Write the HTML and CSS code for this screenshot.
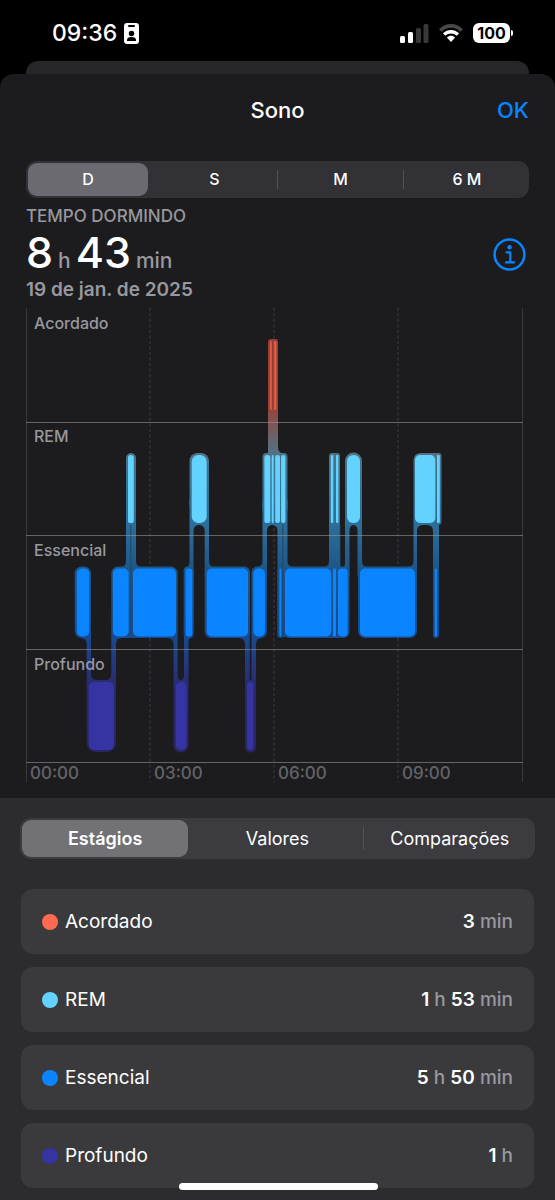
FILE: index.html
```html
<!DOCTYPE html>
<html lang="pt-BR">
<head>
<meta charset="utf-8">
<meta name="viewport" content="width=device-width, initial-scale=1">
<title>Sono</title>
<link rel="stylesheet" href="styles.css">
</head>
<body>
<div class="status-bar">
  <div class="status-left">
    <time class="clock">09:36</time>
    <svg class="id-icon" width="15" height="21" viewBox="0 0 15 21" aria-hidden="true">
      <rect width="15" height="21" rx="3" fill="#fff"/>
      <rect x="4" y="2" width="7" height="2" rx="1" fill="#000"/>
      <circle cx="7.5" cy="10.5" r="2.7" fill="#000"/>
      <path d="M3 18v-1q0-3 4.500-3t4.500 3v1z" fill="#000"/>
    </svg>
  </div>
  <div class="status-right">
    <svg width="29" height="19" viewBox="0 0 29 19" aria-hidden="true">
      <rect x="0" y="12" width="5" height="7" rx="1.500" fill="#fff"/>
      <rect x="8" y="8" width="5" height="11" rx="1.500" fill="#fff"/>
      <rect x="16" y="4" width="5" height="15" rx="1.500" fill="#38383a"/>
      <rect x="23.500" y="0" width="5" height="19" rx="1.500" fill="#38383a"/>
    </svg>
    <svg width="24" height="19" viewBox="0 0 24 19" aria-hidden="true">
      <path d="M0 5.200C6.800-1.700 17.200-1.700 24 5.200L21.600 7.700C16 2.400 8 2.400 2.400 7.700Z" fill="#48484a"/>
      <path d="M3.900 9.300c4.700-4.500 11.500-4.500 16.200 0l-2.400 2.500c-3.400-3.100-8-3.100-11.400 0z" fill="#fff"/>
      <path d="M7.900 13.400c2.400-2.100 5.800-2.100 8.200 0L12 18z" fill="#fff"/>
    </svg>
    <div class="battery"><span class="battery-level">100</span><span class="battery-tip"></span></div>
  </div>
</div>
<div class="back-sheet"></div>
<main class="sheet">
  <header class="sheet-header">
    <h1 class="title">Sono</h1>
    <button class="ok" type="button">OK</button>
  </header>

  <section class="overview">
    <div class="segments" role="group" aria-label="Período">
      <button class="segment selected" type="button" aria-pressed="true">D</button>
      <button class="segment" type="button" aria-pressed="false">S</button>
      <button class="segment divided" type="button" aria-pressed="false">M</button>
      <button class="segment divided" type="button" aria-pressed="false">6 M</button>
    </div>
    <div class="summary">
      <div class="summary-text">
        <p class="caption">TEMPO DORMINDO</p>
        <p class="total"><b>8</b><span>h</span><b>43</b><span>min</span></p>
        <p class="date">19 de jan. de 2025</p>
      </div>
      <button class="info" type="button" aria-label="Informações">
        <svg width="33" height="33" viewBox="0 0 33 33" fill="none" stroke="#0a84ff" aria-hidden="true">
          <circle cx="16.500" cy="16.500" r="14.900" stroke-width="2.500"/>
          <circle cx="16.600" cy="9.300" r="2.200" fill="#0a84ff" stroke="none"/>
          <path d="M13.600 14.400H17.300V24.300M13 24.400H21" stroke-width="2.200" stroke-linecap="round" stroke-linejoin="round"/>
        </svg>
      </button>
    </div>

    <svg class="chart" viewBox="26 308 503 475" role="img" aria-label="Estágios do sono">
      <defs>
        <linearGradient id="halo" gradientUnits="userSpaceOnUse" x1="0" y1="339" x2="0" y2="752">
          <stop offset="0" stop-color="#944135"/>
          <stop offset=".17" stop-color="#94463c"/>
          <stop offset=".27" stop-color="#56707f"/>
          <stop offset=".33" stop-color="#397592"/>
          <stop offset=".45" stop-color="#2d6e98"/>
          <stop offset=".56" stop-color="#1c5689"/>
          <stop offset=".72" stop-color="#174a8e"/>
          <stop offset=".8" stop-color="#25357c"/>
          <stop offset=".85" stop-color="#28286a"/>
          <stop offset="1" stop-color="#28265f"/>
        </linearGradient>
      </defs>

      <g stroke="#3e3e41" stroke-dasharray="3 2.500">
        <path d="M150 308V782M274 308V782M398 308V782"/>
      </g>
      <path d="M26.500 308V782M522.500 308V782" stroke="#38383b"/>

      <g fill="url(#halo)">
        <path d="M268 342a3 3 0 0 1 3-3h4a3 3 0 0 1 3 3V447q0 6 5 6V458H268Z"/>
        <rect x="126" y="453" width="10" height="184" rx="5"/>
        <path d="M126 500H136V561Q136 567 142 567V572H120V567Q126 567 126 561Z"/>
        <rect x="189.500" y="453" width="19.500" height="60" rx="8"/>
        <path d="M189.500 500H209V561Q209 567 215 567V576H204.700V531Q204.700 525 199 525Q193.500 525 193.500 531V632H187V567Q189.500 566 189.500 562Z"/>
        <rect x="262.500" y="453" width="25" height="60" rx="4"/>
        <path d="M262.500 500H287.500V561Q287.500 567 294 567V637H277.500V531Q277.500 525 272 525Q267 525 267 531V576H256V567Q262.500 567 262.500 561Z"/>
        <path d="M329 456a3 3 0 0 1 3-3h5a3 3 0 0 1 3 3V563Q340 567 342.500 567Q345 567 345 563V461a8 8 0 0 1 17 0V561Q362 567 368 567V576H357.500V531Q357.500 525 353.500 525Q349.500 525 349.500 531V576H323V567Q329 567 329 561Z"/>
        <path d="M413.500 460a7 7 0 0 1 7-7H438.500a3 3 0 0 1 3 3V522a3 3 0 0 1-2.500 3V635a3 3 0 0 1-6 0V531Q433 525 427 525H423Q417 525 417 531V576H407V567Q413.500 567 413.500 561Z"/>

        <rect x="74.700" y="566.500" width="16.300" height="71.500" rx="7"/>
        <rect x="111.300" y="566.500" width="66.400" height="71.500" rx="7"/>
        <rect x="183.700" y="566.500" width="10" height="71.500" rx="4"/>
        <rect x="204.700" y="566.500" width="45.300" height="71.500" rx="6"/>
        <rect x="251.500" y="566.500" width="15.500" height="71.500" rx="6"/>
        <rect x="277.500" y="566.500" width="6" height="71.500" rx="3"/>
        <rect x="283" y="566.500" width="66.500" height="71.500" rx="6"/>
        <rect x="358" y="566.500" width="59" height="71.500" rx="7"/>

        <path d="M80 630H91V674Q91 680 97 680H105.300Q111.300 680 111.300 674V630H122V638Q116 638 116 644V743a9 9 0 0 1-9 9H95.700a9 9 0 0 1-9-9V644Q86.700 638 80.700 638Z"/>
        <path d="M167 630H177.700V675Q177.700 680 180.800 680Q184 680 184 675V630H191V638Q188.500 638 188.500 642V745a7 7 0 0 1-15 0V644Q173.500 638 167.500 638Z"/>
        <path d="M239 630H249.700V680H251.500V630H262V638Q256 638 256 644V747a5 5 0 0 1-11 0V644Q245 638 239 638Z"/>
      </g>

      <g stroke="#1c496b" stroke-width="1">
        <path d="M130.800 525V636M282.800 525V636"/>
        <path d="M339.800 525V566" stroke="#245a83"/>
      </g>

      <path d="M26 422.500H523M26 535.500H523M26 649.500H523M26 762.500H523" stroke="#9a9a9d" stroke-opacity=".58"/>

      <g fill="#ef5a42">
        <path d="M269.800 341H276.200V409H269.800Z" fill="#b24936"/>
        <rect x="270" y="341" width="1.800" height="69" rx=".9" fill="#df5943"/>
        <rect x="274.300" y="341" width="2" height="69" rx="1"/>
        <path d="M272.700 341V409" stroke="#7f3c34"/>
      </g>
      <g fill="#64d2ff">
        <rect x="128" y="455" width="5.800" height="68" rx="2.600"/>
        <rect x="191.700" y="455" width="15" height="68" rx="6.500"/>
        <rect x="264.400" y="455" width="5.900" height="68" rx="2.600"/>
        <rect x="271.700" y="455" width="2" height="68" rx="1"/>
        <rect x="275.200" y="455" width="4.800" height="68" rx="2.200"/>
        <rect x="281.100" y="455" width="4.300" height="68" rx="2"/>
        <rect x="330.800" y="455" width="2.500" height="68" rx="1"/>
        <rect x="336" y="455" width="2.400" height="68" rx="1"/>
        <rect x="347" y="455" width="13" height="68" rx="6"/>
        <rect x="415" y="455" width="20.300" height="68" rx="5"/>
        <rect x="437" y="455" width="2.800" height="68" rx="1"/>
      </g>
      <g fill="#0a84ff">
        <rect x="76.800" y="568.500" width="12.500" height="68" rx="5"/>
        <rect x="113" y="568.500" width="15.700" height="68" rx="5"/>
        <rect x="133" y="568.500" width="43" height="68" rx="5"/>
        <rect x="185.700" y="568.500" width="6.600" height="68" rx="2.500"/>
        <rect x="206.700" y="568.500" width="41.300" height="68" rx="5"/>
        <rect x="253.300" y="568.500" width="11.700" height="68" rx="5"/>
        <rect x="279.400" y="568.500" width="2" height="68" rx="1"/>
        <rect x="285" y="568.500" width="46.300" height="68" rx="5"/>
        <rect x="333" y="568.500" width="3" height="68" rx="1"/>
        <rect x="338" y="568.500" width="9.700" height="68" rx="4"/>
        <rect x="360" y="568.500" width="55" height="68" rx="5"/>
        <rect x="434.800" y="568.500" width="2.200" height="68" rx="1"/>
      </g>
      <g fill="#3634a3">
        <rect x="88.700" y="682" width="25.300" height="68" rx="5.500"/>
        <rect x="175.700" y="682" width="11" height="68" rx="5"/>
        <rect x="247" y="682" width="6.500" height="68" rx="3"/>
      </g>

      <g class="stage-label">
        <text x="34" y="329">Acordado</text>
        <text x="34" y="442">REM</text>
        <text x="34" y="556">Essencial</text>
        <text x="34" y="670">Profundo</text>
      </g>
      <g class="hour-label">
        <text x="30" y="779">00:00</text>
        <text x="154" y="779">03:00</text>
        <text x="278" y="779">06:00</text>
        <text x="402" y="779">09:00</text>
      </g>
    </svg>
  </section>

  <section class="details">
    <div class="segments segments-large" role="group" aria-label="Detalhes">
      <button class="segment selected" type="button" aria-pressed="true">Estágios</button>
      <button class="segment" type="button" aria-pressed="false">Valores</button>
      <button class="segment divided" type="button" aria-pressed="false">Comparações</button>
    </div>
    <ul class="stages">
      <li class="stage"><span class="dot awake"></span><span class="name">Acordado</span><span class="value"><b>3</b> min</span></li>
      <li class="stage"><span class="dot rem"></span><span class="name">REM</span><span class="value"><b>1</b> h <b>53</b> min</span></li>
      <li class="stage"><span class="dot core"></span><span class="name">Essencial</span><span class="value"><b>5</b> h <b>50</b> min</span></li>
      <li class="stage"><span class="dot deep"></span><span class="name">Profundo</span><span class="value"><b>1</b> h</span></li>
    </ul>
  </section>
</main>
<div class="home-indicator"></div>
</body>
</html>
```

FILE: styles.css
```css
* { box-sizing: border-box; }

body {
  margin: 0;
  min-height: 100vh;
  display: flex;
  flex-direction: column;
  background: #000;
  color: #fff;
  font-family: Inter, "Liberation Sans", sans-serif;
}

button {
  margin: 0;
  padding: 0;
  border: 0;
  background: none;
  color: inherit;
  font: inherit;
}

h1, p, ul { margin: 0; padding: 0; }

.status-bar {
  height: 61px;
  padding: 5px 42px 0 52px;
  display: flex;
  align-items: center;
  justify-content: space-between;
}

.status-left, .status-right { display: flex; align-items: center; }
.status-left { gap: 7px; }
.status-right { gap: 10px; }

.clock { font-size: 23px; line-height: 28px; font-weight: 500; }

.battery { display: flex; align-items: center; gap: 1px; }

.battery-level {
  width: 37px;
  border-radius: 6px;
  background: #fff;
  color: #000;
  font-size: 16px;
  line-height: 20px;
  font-weight: 700;
  text-align: center;
}

.battery-tip { width: 2px; height: 6px; border-radius: 0 2px 2px 0; background: #fff; }

.back-sheet {
  height: 13px;
  margin: 0 26px;
  border-radius: 12px 12px 0 0;
  background: #272729;
}

.sheet {
  flex: 1;
  display: flex;
  flex-direction: column;
  border-radius: 14px 14px 0 0;
  background: #1c1c1e;
}

.sheet-header {
  padding: 22px 26px;
  display: grid;
  grid-template-columns: 1fr auto 1fr;
  align-items: center;
  line-height: 28px;
}

.title { grid-column: 2; font-size: 22px; font-weight: 500; }
.ok { justify-self: end; color: #0a84ff; font-size: 22px; font-weight: 500; }

.overview { padding: 15px 26px; }

.segments {
  padding: 2px;
  display: grid;
  grid-template-columns: repeat(4, 1fr);
  gap: 6px;
  border-radius: 11px;
  background: #313136;
  font-size: 16px;
  line-height: 33px;
  font-weight: 500;
}

.segment { position: relative; border-radius: 9px; }
.selected { background: #6a6a70; }

.divided::before {
  content: "";
  position: absolute;
  left: -4px;
  top: 7px;
  bottom: 7px;
  width: 1px;
  background: #515157;
}

.summary { display: flex; align-items: center; justify-content: space-between; padding: 8px 3px 0 0; }

.caption {
  color: #98989f;
  font-size: 17px;
  line-height: 20px;
  font-weight: 500;
}

.total {
  padding: 4px 0;
  display: flex;
  align-items: baseline;
  gap: 5px;
  color: #98989f;
  font-size: 21px;
  line-height: 24px;
  font-weight: 500;
}

.total b { color: #fff; font-size: 43px; line-height: 44px; font-weight: 500; }
.date { color: #98989f; font-size: 19px; line-height: 24px; font-weight: 600; }
.info { height: 33px; }

.chart { display: block; width: 100%; height: auto; margin-top: 6px; }
.stage-label { fill: #98989f; font-size: 16px; font-weight: 500; }
.hour-label { fill: #636368; font-size: 17px; font-weight: 500; }

.details { flex: 1; padding: 20px 20px 12px; background: #2c2c2e; }

.segments-large {
  grid-template-columns: repeat(3, 1fr);
  background: #3b3b40;
  font-size: 18px;
  line-height: 37px;
  font-weight: 400;
}

.segments-large .selected { background: #717176; font-weight: 600; }

.stages {
  padding: 30px 1px 0;
  display: grid;
  gap: 13px;
  list-style: none;
}

.stage {
  padding: 0 21px;
  display: flex;
  align-items: center;
  border-radius: 12px;
  background: #3a3a3c;
  font-size: 19px;
  line-height: 65px;
}

.dot { width: 16px; height: 16px; border-radius: 50%; margin-right: 7px; }
.awake { background: #ff6a50; }
.rem { background: #64d2ff; }
.core { background: #0a84ff; }
.deep { background: #3634a3; }

.value { margin-left: auto; color: #98989f; font-weight: 500; }
.value b { color: #fff; font-weight: 600; }

.home-indicator {
  position: fixed;
  left: 50%;
  bottom: 10px;
  width: 199px;
  height: 7px;
  margin-left: -99px;
  border-radius: 4px;
  background: #fff;
}
```
